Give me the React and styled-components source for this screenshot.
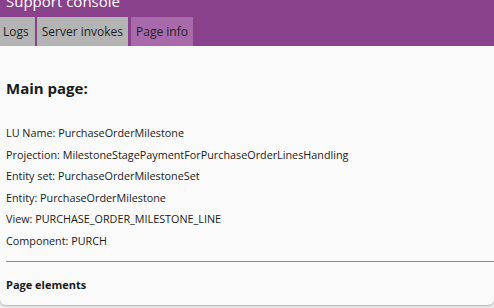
import React from "react";
import styled, { createGlobalStyle } from "styled-components";

const Global = createGlobalStyle`
  html, body { margin: 0; padding: 0; background: #ececec; }
  body { font-family: "Open Sans", "Noto Sans", sans-serif; overflow: hidden; }
`;

const Page = styled.div`
  width: 494px;
  height: 308px;
  display: flex;
  flex-direction: column;
  overflow: hidden;
`;

const Header = styled.div`
  background: #8a418c;
  height: 46px;
  display: flex;
  flex-direction: column;
  flex-shrink: 0;
`;

const Title = styled.div`
  color: #ffffff;
  font-size: 15px;
  line-height: 20px;
  margin-top: -9px;
  padding-left: 6px;
  height: 26px;
`;

const Tabs = styled.div`
  display: flex;
  align-items: flex-end;
  height: 29px;
`;

const Tab = styled.div`
  height: 29px;
  padding: 0 ${(p) => (p.$first ? "6px 0 3px" : "5px")};
  margin-left: ${(p) => (p.$first ? "0" : p.$active ? "3px" : "2px")};
  display: flex;
  align-items: center;
  font-size: 12px;
  color: #1f1f1f;
  background: ${(p) => (p.$active ? "#a96aab" : "#b4b4b4")};
`;

const Panel = styled.div`
  background: #fafafa;
  height: 259px;
  border-radius: 0 0 6px 6px;
  box-shadow: 0 1px 2px rgba(0, 0, 0, 0.25);
  padding: 0 0 0 6px;
  display: flex;
  flex-direction: column;
  color: #1a1a1a;
`;

const Heading = styled.h2`
  margin: 32px 0 0 0;
  font-size: 15px;
  font-weight: 700;
  line-height: 20px;
`;

const InfoList = styled.div`
  margin-top: 24px;
  display: flex;
  flex-direction: column;
`;

const InfoLine = styled.div`
  font-size: 10.8px;
  line-height: 21.5px;
`;

const Divider = styled.hr`
  margin: 10px 0 0 0;
  border: none;
  border-top: 1px solid #8c8c8c;
  height: 0;
`;

const SubHeading = styled.div`
  margin-top: 13px;
  font-size: 11px;
  font-weight: 700;
  line-height: 20px;
`;

const info = [
  "LU Name: PurchaseOrderMilestone",
  "Projection: MilestoneStagePaymentForPurchaseOrderLinesHandling",
  "Entity set: PurchaseOrderMilestoneSet",
  "Entity: PurchaseOrderMilestone",
  "View: PURCHASE_ORDER_MILESTONE_LINE",
  "Component: PURCH",
];

export default function App() {
  return (
    <Page>
      <Global />
      <Header>
        <Title>Support console</Title>
        <Tabs>
          <Tab $first>Logs</Tab>
          <Tab>Server invokes</Tab>
          <Tab $active>Page info</Tab>
        </Tabs>
      </Header>
      <Panel>
        <Heading>Main page:</Heading>
        <InfoList>
          {info.map((t) => (
            <InfoLine key={t}>{t}</InfoLine>
          ))}
        </InfoList>
        <Divider />
        <SubHeading>Page elements</SubHeading>
      </Panel>
    </Page>
  );
}
